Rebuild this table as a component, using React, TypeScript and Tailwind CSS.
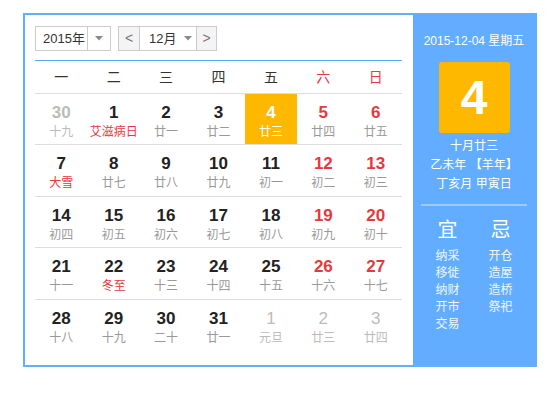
import React from "react";

type Day = { n: number; l: string; other?: boolean; redNum?: boolean; redL?: boolean; sel?: boolean };

const rows: Day[][] = [
  [
    { n: 30, l: "十九", other: true },
    { n: 1, l: "艾滋病日", redL: true },
    { n: 2, l: "廿一" },
    { n: 3, l: "廿二" },
    { n: 4, l: "廿三", sel: true },
    { n: 5, l: "廿四", redNum: true },
    { n: 6, l: "廿五", redNum: true },
  ],
  [
    { n: 7, l: "大雪", redL: true },
    { n: 8, l: "廿七" },
    { n: 9, l: "廿八" },
    { n: 10, l: "廿九" },
    { n: 11, l: "初一" },
    { n: 12, l: "初二", redNum: true },
    { n: 13, l: "初三", redNum: true },
  ],
  [
    { n: 14, l: "初四" },
    { n: 15, l: "初五" },
    { n: 16, l: "初六" },
    { n: 17, l: "初七" },
    { n: 18, l: "初八" },
    { n: 19, l: "初九", redNum: true },
    { n: 20, l: "初十", redNum: true },
  ],
  [
    { n: 21, l: "十一" },
    { n: 22, l: "冬至", redL: true },
    { n: 23, l: "十三" },
    { n: 24, l: "十四" },
    { n: 25, l: "十五" },
    { n: 26, l: "十六", redNum: true },
    { n: 27, l: "十七", redNum: true },
  ],
  [
    { n: 28, l: "十八" },
    { n: 29, l: "十九" },
    { n: 30, l: "二十" },
    { n: 31, l: "廿一" },
    { n: 1, l: "元旦", other: true },
    { n: 2, l: "廿三", other: true },
    { n: 3, l: "廿四", other: true },
  ],
];

const rowH = ["h-[51px] border-b", "h-[52px] border-b", "h-[51px] border-b", "h-[52px] border-b", "h-[51px]"];

const weekdays = ["一", "二", "三", "四", "五", "六", "日"];

function Caret() {
  return (
    <svg width="8" height="5" viewBox="0 0 8 5">
      <path d="M0 0 L8 0 L4 4.5 Z" fill="#8a8a8a" />
    </svg>
  );
}

function Cell({ d, first }: { d: Day; first: boolean }) {
  let numCls = "text-[#222]";
  let lCls = "text-[#999]";
  if (d.other) {
    numCls = "text-[#bbb]";
    lCls = "text-[#bbb]";
  } else if (d.sel) {
    numCls = "text-white";
    lCls = "text-white";
  } else {
    if (d.redNum) numCls = "text-[#e8383d]";
    if (d.redL) lCls = "text-[#e8383d]";
  }
  const weight = d.other && !first ? "font-normal" : "font-bold";
  return (
    <div className={`flex flex-col items-center pt-[9px] ${d.sel ? "bg-[#ffb800]" : ""}`}>
      <div className={`text-[17px] leading-[20px] ${weight} ${numCls}`}>{d.n}</div>
      <div className={`mt-[2px] text-[12px] leading-[14px] ${lCls}`}>{d.l}</div>
    </div>
  );
}

export default function App() {
  return (
    <div className="min-h-[420px] w-[560px] bg-white pl-[23px] pt-[13px] font-['Liberation_Sans','Noto_Sans_CJK_SC',sans-serif]">
      <div className="flex h-[354px] w-[514px] border-2 border-[#64aefd] bg-white">
        {/* left */}
        <div className="w-[388px] pl-[10px] pr-[11px] pt-[11px]">
          <div className="flex h-[25px] gap-[7px] text-[13px] text-[#333]">
            <div className="flex w-[76px] border border-[#ccc]">
              <div className="flex w-[51px] items-center pl-[7px]">2015年</div>
              <div className="flex flex-1 items-center justify-center border-l border-[#ccc]">
                <Caret />
              </div>
            </div>
            <div className="flex w-[99px] border border-[#ccc]">
              <div className="flex w-[20px] items-center justify-center bg-[#f4f4f4] text-[14px] text-[#777]">&lt;</div>
              <div className="flex w-[58px] items-center border-x border-[#ccc] pl-[9px]">
                <span>12月</span>
                <span className="ml-[8px] flex">
                  <Caret />
                </span>
              </div>
              <div className="flex flex-1 items-center justify-center bg-[#f4f4f4] text-[14px] text-[#777]">&gt;</div>
            </div>
          </div>
          <div className="mt-[9px] grid h-[34px] grid-cols-7 border-y border-t-[#5aa9fb] border-b-[#ddd] text-[14px]">
            {weekdays.map((w, i) => (
              <div key={w} className={`flex items-center justify-center ${i >= 5 ? "text-[#e8383d]" : "text-[#333]"}`}>
                {w}
              </div>
            ))}
          </div>
          {rows.map((r, i) => (
            <div key={i} className={`grid grid-cols-7 border-[#ddd] ${rowH[i]}`}>
              {r.map((d, j) => (
                <Cell key={j} d={d} first={i === 0} />
              ))}
            </div>
          ))}
        </div>
        {/* right */}
        <div className="flex flex-1 flex-col items-center bg-[#62adff] pt-[18px] text-[12px] text-white">
          <div className="leading-[16px]">2015-12-04 星期五</div>
          <div className="mt-[13px] flex h-[71px] w-[71px] items-center justify-center rounded-[3px] bg-[#ffb800] text-[48px] font-bold leading-none text-white">
            4
          </div>
          <div className="mt-[4px] flex flex-col items-center leading-[19px]">
            <div>十月廿三</div>
            <div>乙未年 【羊年】</div>
            <div>丁亥月 甲寅日</div>
          </div>
          <div className="mt-[10px] h-[2px] w-[106px] bg-[#9ccbff]" />
          <div className="mt-[12px] grid w-[106px] grid-cols-2 justify-items-center">
            <div className="flex flex-col items-center">
              <div className="text-[20px] leading-[24px]">宜</div>
              <div className="mt-[6px] flex flex-col items-center leading-[17px] text-white/90">
                <div>纳采</div>
                <div>移徙</div>
                <div>纳财</div>
                <div>开市</div>
                <div>交易</div>
              </div>
            </div>
            <div className="flex flex-col items-center">
              <div className="text-[20px] leading-[24px]">忌</div>
              <div className="mt-[6px] flex flex-col items-center leading-[17px] text-white/90">
                <div>开仓</div>
                <div>造屋</div>
                <div>造桥</div>
                <div>祭祀</div>
              </div>
            </div>
          </div>
        </div>
      </div>
    </div>
  );
}
